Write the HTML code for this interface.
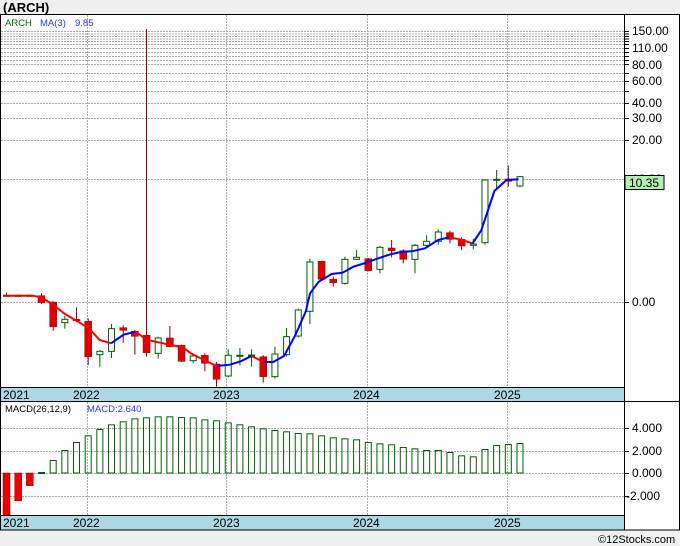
<!DOCTYPE html>
<html><head><meta charset="utf-8"><style>
html,body{margin:0;padding:0;background:#f0f0f0;width:680px;height:546px;overflow:hidden;font-family:"Liberation Sans",sans-serif}
svg{position:absolute;left:0;top:0}
</style></head><body>
<svg id="s" width="680" height="546" xmlns="http://www.w3.org/2000/svg" font-family="Liberation Sans, DejaVu Sans, sans-serif">
<rect x="0" y="0" width="680" height="546" fill="#f0f0f0"/>
<text x="3" y="12" font-size="13" font-weight="bold" fill="#000">(ARCH)</text>
<rect x="0.5" y="14.5" width="679" height="515.5" fill="#fff" stroke="#000"/>
<rect x="1" y="387" width="623" height="14" fill="#add8e6"/>
<rect x="1" y="515" width="623" height="14.5" fill="#add8e6"/>
<g id="grid" stroke="#aaa" stroke-dasharray="2,1" stroke-width="1"></g>
<g id="cd"></g>
<line x1="624.5" y1="14" x2="624.5" y2="530" stroke="#000"/>
<line x1="0" y1="387.5" x2="624" y2="387.5" stroke="#000"/>
<line x1="0" y1="401.5" x2="680" y2="401.5" stroke="#000"/>
<line x1="0" y1="515.5" x2="624" y2="515.5" stroke="#000"/>
<g font-size="12" fill="#000">
<text x="3" y="399">2021</text><text x="73" y="399">2022</text><text x="213" y="399">2023</text><text x="353" y="399">2024</text><text x="494" y="399">2025</text>
<text x="3" y="527">2021</text><text x="73" y="527">2022</text><text x="213" y="527">2023</text><text x="353" y="527">2024</text><text x="494" y="527">2025</text>
</g>
<g font-size="12" fill="#000" id="ax">
<text x="632" y="35">150.00</text><text x="632" y="52">110.00</text><text x="632" y="69">80.00</text><text x="632" y="85">60.00</text><text x="632" y="107">40.00</text><text x="632" y="122">30.00</text><text x="632" y="144">20.00</text><text x="632" y="183">10.00</text><text x="632" y="306">0.00</text>
<text x="632" y="432">4.000</text><text x="632" y="455">2.000</text><text x="632" y="477">0.000</text><text x="626" y="500">-2.000</text>
</g>
<rect x="625" y="175.5" width="39" height="14" fill="#b4f0b4" stroke="#000"/>
<text x="629" y="187" font-size="12" fill="#000">10.35</text>
<g font-size="9.5">
<text x="5" y="26" fill="#007000">ARCH</text><text x="40" y="26" fill="#3030ff">MA(3)</text><text x="75" y="26" fill="#3030ff">9.85</text>
<text x="5" y="412" fill="#000">MACD(26,12,9)</text><text x="87" y="412" fill="#3030ff">MACD:2.640</text>
</g>
<text x="598" y="543" font-size="11" fill="#000">©12Stocks.com</text>
</svg>
<script>
var NS="http://www.w3.org/2000/svg";
function el(p,t,a){var e=document.createElementNS(NS,t);for(var k in a)e.setAttribute(k,a[k]);p.appendChild(e);return e;}
var g=document.getElementById('grid');
[31,33.5,36,38.5,41,44,48,52,56,60,64,73,81,91,103,118,140,179,302,428,451,473,496].forEach(function(y){el(g,'line',{x1:1,x2:624,y1:y+.5,y2:y+.5});el(g,'line',{x1:624,x2:629,y1:y+.5,y2:y+.5,stroke:'#000','stroke-dasharray':'none'});});
[87,226,367,507].forEach(function(x){el(g,'line',{x1:x+.5,x2:x+.5,y1:15,y2:387});el(g,'line',{x1:x+.5,x2:x+.5,y1:402,y2:515});});
var c=document.getElementById('cd');
function X(i){return 6.5+11.67*i;}
var m=[-856,-812,-767,726,690,660,636,616,597,583,574,565,562,559,559,561,562,568,571,577,583,589,595,600,604,609,610,616,622,625,628,636,640,643,651,655,660,660,666,676,679,657,645,642,639];
m.forEach(function(v,i){var x=X(i)-3.5;var base=473;
 if(v<0){var b=230-v/3;el(c,'rect',{x:x,y:base,width:7,height:b-base,fill:'#e00',stroke:'#900','stroke-width':.5});}
 else{var t=230+v/3;el(c,'rect',{x:x+.5,y:t+.5,width:6,height:Math.max(base-t-.5,1),fill:'none',stroke:'#006000'});}});
var d=[['g',196,197,188,200],['g',196,197,194,199],['g',196,197,194,199],['r',197,218,190,222],['r',216,290,214,302],['g',268,278,258,296],['r',268,272,232,276],['r',274,380,265,405],['g',364,374,360,410],['g',296,364,282,384],['r',293,301,286,338],['r',304,319,300,374],['r',316,368,-603,380],['g',324,370,320,386],['r',324,350,288,352],['r',346,394,344,396],['g',378,392,374,400],['r',376,400,370,424],['r',402,448,396,470],['g',376,438,358,442],['g',376,378,354,406],['g',375,377,358,410],['r',380,440,376,458],['g',372,440,350,446],['g',320,374,294,380],['g',240,318,236,322],['g',96,244,86,282],['r',94,148,92,150],['r',148,158,140,170],['g',88,160,80,164],['g',82,88,60,90],['r',86,122,84,124],['g',52,118,48,130],['r',54,62,30,82],['r',62,88,58,100],['g',46,88,42,130],['g',34,46,16,50],['g',6,34,-2,44],['r',8,28,2,40],['r',28,48,22,60],['g',42,46,26,58],['g',-150,38,-150,44],['g',-152,-150,-180,-120],['r',-153,-146,-193,-130],['g',-160,-132,-162,-128]];
d.forEach(function(a,i){var x=X(i),T=230+a[1]/3,B=230+a[2]/3,wt=230+a[3]/3,wb=230+a[4]/3;
 var col=a[0]=='r'?'#800000':'#006000';
 el(c,'line',{x1:x,x2:x,y1:wt,y2:wb,stroke:col,'stroke-width':1});
 if(a[0]=='r')el(c,'rect',{x:x-3.5,y:T,width:7,height:Math.max(B-T,1.5),fill:'#e00000',stroke:'#900','stroke-width':.5});
 else el(c,'rect',{x:x-3,y:T,width:6,height:Math.max(B-T,1),fill:'#fff',stroke:'#006000','stroke-width':1});});
var segs=[['#f00',[[8,197],[75,197],[96,202],[120,222],[150,252],[180,275],[205,295],[230,330],[256,340]]],
['#00f',[[256,340],[285,314],[312,305]]],
['#f00',[[312,305],[340,330],[370,338],[395,346],[420,350],[440,370],[470,390],[500,408]]],
['#00f',[[500,408],[530,404],[555,394],[580,378]]],
['#f00',[[580,378],[608,396]]],
['#00f',[[608,396],[630,396],[655,378],[680,318],[705,245],[715,190],[735,155],[765,132],[790,128],[815,110],[840,100],[870,86],[900,73],[925,66],[950,64],[980,55],[1010,30],[1035,22]]],
['#f00',[[1035,22],[1060,28],[1090,40]]],
['#00f',[[1090,40],[1110,0],[1140,-117],[1168,-150],[1196,-152]]]];
segs.forEach(function(s){el(c,'polyline',{points:s[1].map(function(p){return (p[0]/2.306).toFixed(1)+','+(230+p[1]/3).toFixed(1)}).join(' '),fill:'none',stroke:s[0],'stroke-width':2});});
</script>
</body></html>
